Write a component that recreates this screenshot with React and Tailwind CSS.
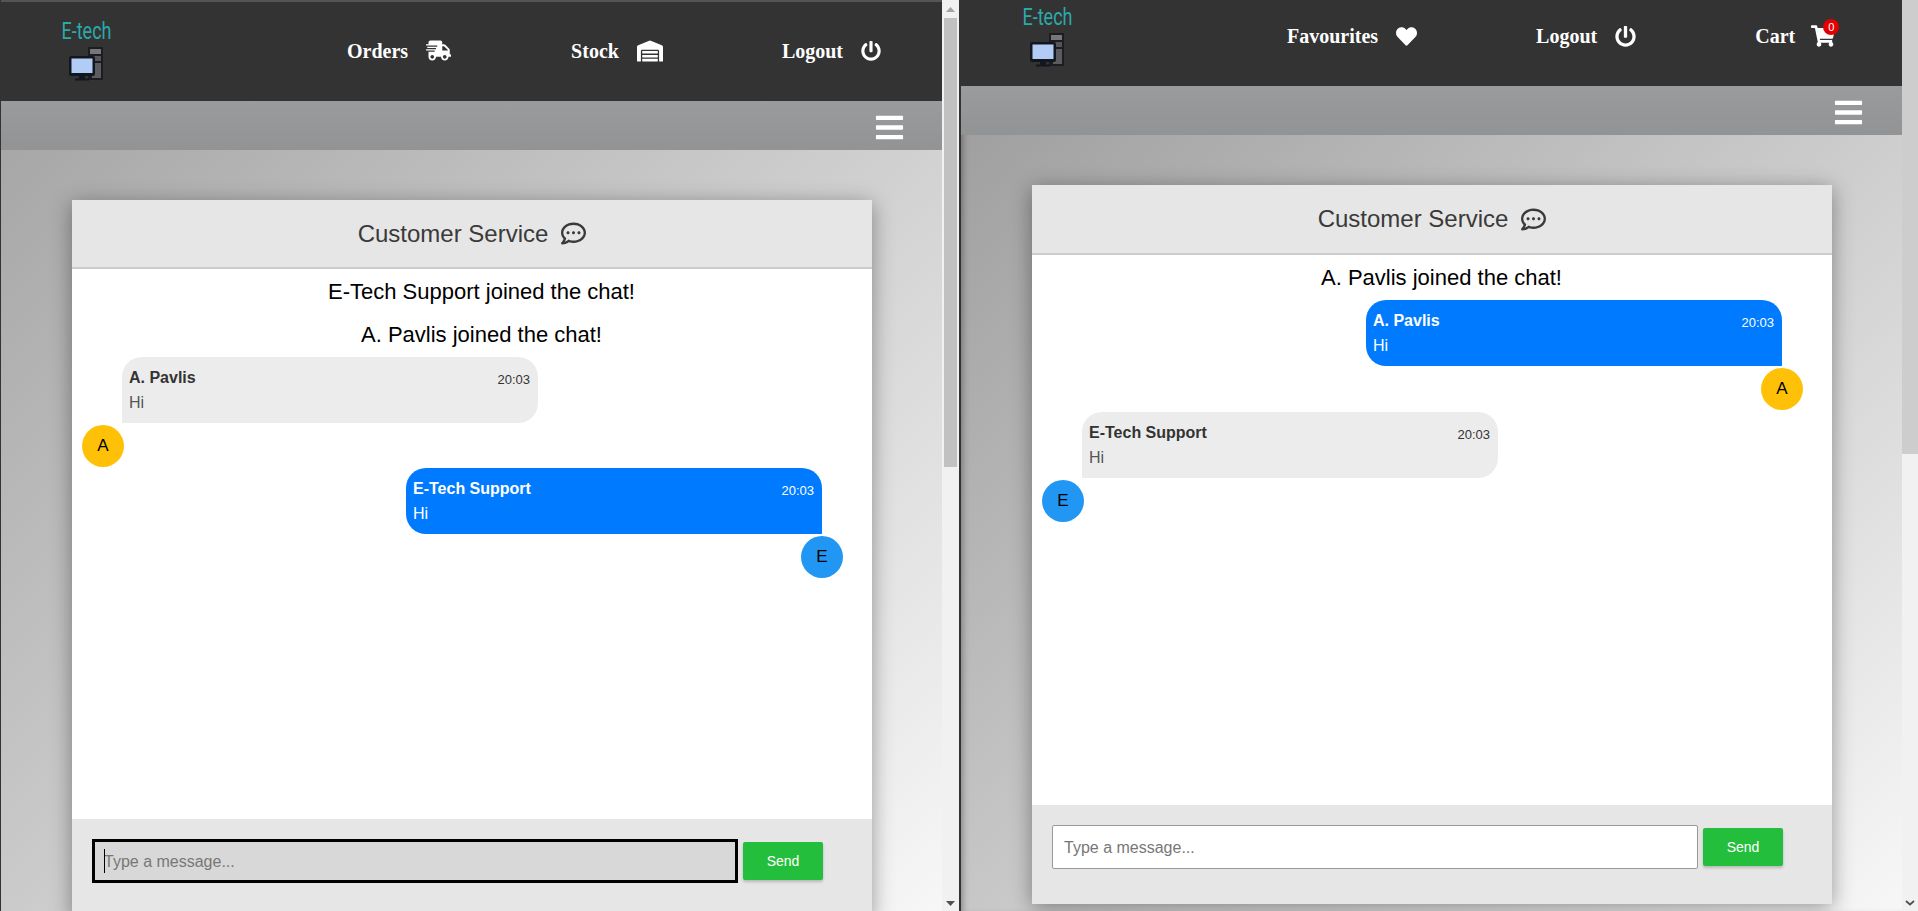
import {
  FaShippingFast,
  FaWarehouse,
  FaPowerOff,
  FaHeart,
  FaShoppingCart,
  FaBars,
  FaRegCommentDots,
} from 'react-icons/fa';

const serif = 'font-["Liberation_Serif",serif]';

function Logo({ className = '' }) {
  return (
    <div className={`flex w-[49px] flex-col items-center ${className}`}>
      <span className='h-[22px] scale-y-[1.3] font-["Roboto",sans-serif] text-[18px] leading-[22px] font-normal whitespace-nowrap text-[#2ba9a9]'>
        E-tech
      </span>
      <svg className="mt-[4px] ml-[-2px]" width="36" height="35" viewBox="0 0 36 35" aria-hidden="true">
        <rect x="20" y="1" width="15" height="33" rx="1" fill="#1d1d1f" />
        <rect x="22" y="3" width="11" height="5" fill="#77777a" />
        <rect x="22" y="10" width="11" height="5" fill="#55555a" />
        <rect x="24" y="17" width="9" height="15" fill="#5c5c60" />
        <rect x="1" y="10" width="26" height="20" rx="2" fill="#12171f" />
        <rect x="3.5" y="12.5" width="21" height="14.5" fill="#b2cdf5" />
        <rect x="11" y="30" width="6" height="3" fill="#12171f" />
        <rect x="7" y="32.5" width="14" height="2" fill="#12171f" />
      </svg>
    </div>
  );
}

function NavItem({ label, children, className = 'gap-[18px]' }) {
  return (
    <div className={`flex items-center ${className}`}>
      <span className={`${serif} text-[20px] leading-[24px] font-bold text-white`}>{label}</span>
      {children}
    </div>
  );
}

function Message({ name, side, avatar, avatarColor, spacing = 'mb-[1px]' }) {
  const right = side === 'right';
  return (
    <div className={`flex flex-col ${spacing} ${right ? 'items-end' : 'items-start'}`}>
      <div
        className={`h-[66px] w-[416px] rounded-[20px] pt-[11px] pr-[8px] pl-[7px] ${
          right ? 'mr-[21px] rounded-br-none bg-[#007bff] text-white' : 'ml-[40px] rounded-bl-none bg-[#ececec] text-[#333]'
        }`}
      >
        <div className="mb-[5px] flex h-[20px] items-center justify-between">
          <span className="text-[16px] leading-[20px] font-bold">{name}</span>
          <span className="pt-[3px] text-[13px] leading-[20px]">20:03</span>
        </div>
        <div className={`text-[16px] leading-[20px] ${right ? 'text-white' : 'text-[#555]'}`}>Hi</div>
      </div>
      <div
        className={`mt-[2px] flex h-[42px] w-[42px] items-center justify-center rounded-full text-[17px] text-black ${avatarColor}`}
      >
        {avatar}
      </div>
    </div>
  );
}

function ChatCard({ joined, messages, focused, headerClass, className = '' }) {
  return (
    <section
      className={`flex h-[719px] w-[800px] shrink-0 flex-col font-["Liberation_Sans",sans-serif] shadow-[0_4px_20px_rgba(0,0,0,0.38)] ${className}`}
    >
      <header
        className={`flex shrink-0 items-center justify-center gap-[13px] border-b-2 border-[#ccc] bg-[#e6e6e6] text-[#3a3a3a] ${headerClass}`}
      >
        <span className="text-[24px] leading-[28px]">Customer Service</span>
        <FaRegCommentDots size={25} />
      </header>
      <div className="h-[550px] shrink-0 bg-white pt-[10px] pr-[29px] pl-[10px]">
        {joined.map((text, i) => (
          <p
            key={text}
            className={`pl-[38px] text-center text-[22px] leading-[25px] text-black ${
              i === joined.length - 1 ? 'mb-[10px]' : 'mb-[18px]'
            }`}
          >
            {text}
          </p>
        ))}
        {messages.map((m) => (
          <Message key={m.name} {...m} />
        ))}
      </div>
      <div className="flex flex-1 items-start bg-[#e6e6e6] px-[20px] pt-[20px]">
        <div className="relative">
          <input
            readOnly
            placeholder="Type a message..."
            className={`h-[44px] w-[646px] pt-[2px] text-[16px] placeholder:text-[#777] ${
              focused
                ? 'border-[3px] border-black bg-[#d8d8d8] px-[9px]'
                : 'rounded-[2px] border border-[#999] bg-white px-[11px]'
            }`}
          />
          {focused && <span className="absolute top-[10px] left-[12px] h-[24px] w-px bg-black" />}
        </div>
        <button className="mt-[3px] ml-[5px] h-[38px] w-[80px] rounded-[2px] bg-[#23bf3c] text-[14px] text-white shadow-[0_2px_3px_rgba(0,0,0,0.2)]">
          Send
        </button>
      </div>
    </section>
  );
}

function Scrollbar({ thumbHeight, thumbClass, wide, children }) {
  return (
    <div className={`flex h-[911px] shrink-0 flex-col bg-[#f1f1f1] ${wide ? 'w-[17px]' : 'w-[16px]'}`}>
      {children}
      <div className={`shrink-0 ${thumbClass}`} style={{ height: thumbHeight }} />
      <div className="flex flex-1 items-end justify-center pb-[5px]">
        {wide ? (
          <svg width="9" height="5" viewBox="0 0 9 5" aria-hidden="true">
            <polygon points="0,0 9,0 4.5,5" fill="#505050" />
          </svg>
        ) : (
          <svg width="10" height="6" viewBox="0 0 10 6" aria-hidden="true">
            <path d="M1 1l4 3.5L9 1" fill="none" stroke="#505050" strokeWidth="1.8" />
          </svg>
        )}
      </div>
    </div>
  );
}

function SubBar({ className }) {
  return (
    <div className={`flex h-[49px] shrink-0 items-center justify-end bg-gradient-to-b from-[#9a9b9d] to-[#929395] pt-[4px] ${className}`}>
      <FaBars size={31} color="#fff" />
    </div>
  );
}

export default function App() {
  return (
    <div className="flex h-[911px] w-[1918px] overflow-hidden bg-white">
      {/* left window */}
      <div className="flex h-[911px] w-[942px] shrink-0 flex-col overflow-hidden border-l border-[#333] bg-gradient-to-br from-[#a0a0a0] to-[#f7f7f7]">
        <nav className="flex h-[101px] shrink-0 items-center border-t-2 border-[#555] bg-[#333] pb-[2px]">
          <Logo className="ml-[61px]" />
          <NavItem label="Orders" className="ml-[236px] gap-[18px]">
            <FaShippingFast size={25} color="#fff" />
          </NavItem>
          <NavItem label="Stock" className="ml-[120px] gap-[18px]">
            <FaWarehouse size={26} color="#fff" />
          </NavItem>
          <NavItem label="Logout" className="ml-[119px] gap-[18px]">
            <FaPowerOff size={20} color="#fff" />
          </NavItem>
        </nav>
        <SubBar className="pr-[37px]" />
        <ChatCard
          className="mt-[50px] ml-[71px]"
          headerClass="h-[69px]"
          focused
          joined={['E-Tech Support joined the chat!', 'A. Pavlis joined the chat!']}
          messages={[
            { name: 'A. Pavlis', side: 'left', avatar: 'A', avatarColor: 'bg-[#ffc107]' },
            { name: 'E-Tech Support', side: 'right', avatar: 'E', avatarColor: 'bg-[#2196f3]' },
          ]}
        />
      </div>
      <Scrollbar wide thumbHeight={449} thumbClass="mx-[2px] bg-[#c1c1c1]">
        <div className="flex h-[18px] shrink-0 items-center justify-center">
          <svg width="9" height="5" viewBox="0 0 9 5" aria-hidden="true">
            <polygon points="0,5 9,5 4.5,0" fill="#a3a3a3" />
          </svg>
        </div>
      </Scrollbar>
      <div className="w-[2px] shrink-0 bg-[#333]" />

      {/* right window */}
      <div className="flex h-[911px] w-[941px] shrink-0 flex-col overflow-hidden bg-gradient-to-br from-[#999] to-[#f7f7f7] shadow-[inset_6px_0_6px_-4px_rgba(0,0,0,0.3)]">
        <nav className="flex h-[86px] shrink-0 items-center bg-[#333] pb-[14px]">
          <Logo className="ml-[62px]" />
          <NavItem label="Favourites" className="ml-[215px] gap-[18px]">
            <FaHeart size={21} color="#fff" />
          </NavItem>
          <NavItem label="Logout" className="ml-[119px] gap-[18px]">
            <FaPowerOff size={21} color="#fff" />
          </NavItem>
          <NavItem label="Cart" className="ml-[119px] gap-[16px]">
            <div className="relative">
              <FaShoppingCart size={24} color="#fff" />
              <span className="absolute -top-[5px] left-[12px] flex h-[16px] w-[16px] items-center justify-center rounded-full bg-[#e40000] font-['Liberation_Sans',sans-serif] text-[11px] text-white">
                0
              </span>
            </div>
          </NavItem>
        </nav>
        <SubBar className="pr-[38px]" />
        <ChatCard
          className="mt-[50px] ml-[71px]"
          headerClass="h-[70px]"
          joined={['A. Pavlis joined the chat!']}
          messages={[
            { name: 'A. Pavlis', side: 'right', avatar: 'A', avatarColor: 'bg-[#ffc107]', spacing: 'mb-[2px]' },
            { name: 'E-Tech Support', side: 'left', avatar: 'E', avatarColor: 'bg-[#2196f3]' },
          ]}
        />
      </div>
      <Scrollbar thumbHeight={454} thumbClass="bg-[#cdcdcd]" />
    </div>
  );
}
